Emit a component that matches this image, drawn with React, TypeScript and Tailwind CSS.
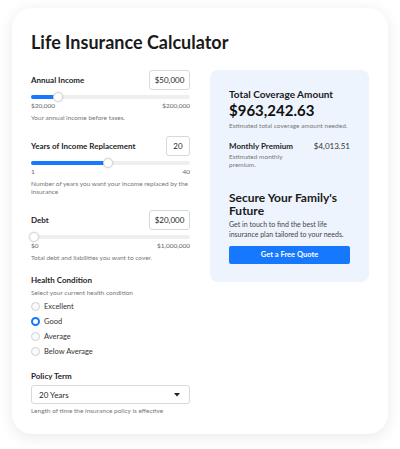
import { useState } from "react";

type SliderField = {
  key: string;
  label: string;
  value: number;
  min: number;
  max: number;
  display: string;
  boxWidth: string;
  minLabel: string;
  maxLabel: string;
  help: string;
};

const fields: SliderField[] = [
  {
    key: "income",
    label: "Annual Income",
    value: 50000,
    min: 20000,
    max: 200000,
    display: "$50,000",
    boxWidth: "w-[41px]",
    minLabel: "$20,000",
    maxLabel: "$200,000",
    help: "Your annual income before taxes.",
  },
  {
    key: "years",
    label: "Years of Income Replacement",
    value: 20,
    min: 1,
    max: 40,
    display: "20",
    boxWidth: "w-[24px]",
    minLabel: "1",
    maxLabel: "40",
    help: "Number of years you want your income replaced by the insurance",
  },
  {
    key: "debt",
    label: "Debt",
    value: 20000,
    min: 0,
    max: 1000000,
    display: "$20,000",
    boxWidth: "w-[41px]",
    minLabel: "$0",
    maxLabel: "$1,000,000",
    help: "Total debt and liabilities you want to cover.",
  },
];

const healthOptions = ["Excellent", "Good", "Average", "Below Average"];

function Slider({ field }: { field: SliderField }) {
  const pct = ((field.value - field.min) / (field.max - field.min)) * 100;
  return (
    <div>
      <div className="flex items-center justify-between">
        <span className="text-[8px] font-bold leading-[11px] text-[#1f1f1f]">{field.label}</span>
        <div
          className={`${field.boxWidth} h-[20px] flex items-center justify-center rounded-[3px] border border-[#d9d9d9] bg-white text-[8px] text-[#262626]`}
        >
          {field.display}
        </div>
      </div>
      <div className="relative mt-[2px] h-[10px]">
        <div className="absolute left-0 right-0 top-[3px] h-[4px] rounded-full bg-[#efefef]" />
        <div
          className="absolute left-0 top-[3px] h-[4px] rounded-full bg-[#1677ff]"
          style={{ width: `${pct}%` }}
        />
        <div
          className="absolute top-0 h-[10px] w-[10px] -translate-x-1/2 rounded-full border border-[#d6d6d6] bg-white shadow-[0_0_2px_rgba(0,0,0,0.15)]"
          style={{ left: `${pct}%` }}
        />
      </div>
      <div className="flex justify-between text-[6.5px] leading-[8px] text-[#666]">
        <span>{field.minLabel}</span>
        <span>{field.maxLabel}</span>
      </div>
      <p className="mt-[4px] text-[6.5px] leading-[8px] text-[#777]">{field.help}</p>
    </div>
  );
}

export default function App() {
  const [health, setHealth] = useState("Good");

  return (
    <div className="min-h-screen bg-white pl-[12px] pt-[8px] font-['Lato',sans-serif]">
      <div className="h-[426px] w-[376px] rounded-[20px] bg-white px-[19px] pt-[23px] shadow-[0_3px_16px_rgba(0,0,0,0.09)]">
        <h1 className="text-[18px] font-bold leading-[22px] text-[#1a1a1a]">Life Insurance Calculator</h1>

        <div className="mt-[17px] grid grid-cols-2 items-start gap-5">
          <div>
            <div className="flex flex-col gap-[14px]">
              {fields.map((f) => (
                <Slider key={f.key} field={f} />
              ))}
            </div>

            <div className="mt-[13px]">
              <div className="text-[8px] font-bold leading-[11px] text-[#1f1f1f]">Health Condition</div>
              <div className="mt-[2px] text-[6.5px] leading-[10px] text-[#777]">
                Select your current health condition
              </div>
              <div className="mt-[1px]">
                {healthOptions.map((opt) => (
                  <label
                    key={opt}
                    className="flex h-[15px] cursor-pointer items-center gap-[4px]"
                    onClick={() => setHealth(opt)}
                  >
                    {health === opt ? (
                      <span className="h-[9px] w-[9px] rounded-full border-[2.5px] border-[#1677ff] bg-white" />
                    ) : (
                      <span className="h-[9px] w-[9px] rounded-full border border-[#cfcfcf] bg-[#fafafa]" />
                    )}
                    <span className="text-[7.5px] text-[#333]">{opt}</span>
                  </label>
                ))}
              </div>
            </div>

            <div className="mt-[12px]">
              <div className="text-[8px] font-bold leading-[11px] text-[#1f1f1f]">Policy Term</div>
              <div className="mt-[3px] flex h-[19px] items-center justify-between rounded-[3px] border border-[#d9d9d9] bg-white pl-[7px] pr-[9px]">
                <span className="text-[8px] text-[#262626]">20 Years</span>
                <svg width="6" height="4" viewBox="0 0 6 4">
                  <path d="M0 0 L6 0 L3 3.5 Z" fill="#222" />
                </svg>
              </div>
              <p className="mt-[2px] text-[6.5px] leading-[10px] text-[#777]">
                Length of time the insurance policy is effective
              </p>
            </div>
          </div>

          <div className="rounded-[8px] bg-[#eef4fd] px-[19px] pb-[18px] pt-[18px]">
            <div className="text-[10px] font-bold leading-[13px] text-[#1a1a1a]">Total Coverage Amount</div>
            <div className="text-[15px] font-bold leading-[18px] text-[#111]">$963,242.63</div>
            <p className="mt-[2px] text-[6.5px] leading-[10px] text-[#777]">
              Estimated total coverage amount needed.
            </p>

            <div className="mt-[10px] flex items-start justify-between">
              <div className="max-w-[64px]">
                <div className="whitespace-nowrap text-[8px] font-bold leading-[11px] text-[#1f1f1f]">
                  Monthly Premium
                </div>
                <p className="mt-[1px] text-[6.5px] leading-[8px] text-[#777]">Estimated monthly premium.</p>
              </div>
              <span className="text-[8px] leading-[11px] text-[#333]">$4,013.51</span>
            </div>

            <h2 className="mt-[22px] text-[12px] font-bold leading-[13px] text-[#1a1a1a]">
              Secure Your Family's Future
            </h2>
            <p className="mt-[3px] text-[7px] leading-[9.5px] text-[#444]">
              Get in touch to find the best life insurance plan tailored to your needs.
            </p>
            <button className="mt-[7px] flex h-[18px] w-full items-center justify-center rounded-[2px] bg-[#1677ff] text-[7.5px] font-bold text-white">
              Get a Free Quote
            </button>
          </div>
        </div>
      </div>
    </div>
  );
}
